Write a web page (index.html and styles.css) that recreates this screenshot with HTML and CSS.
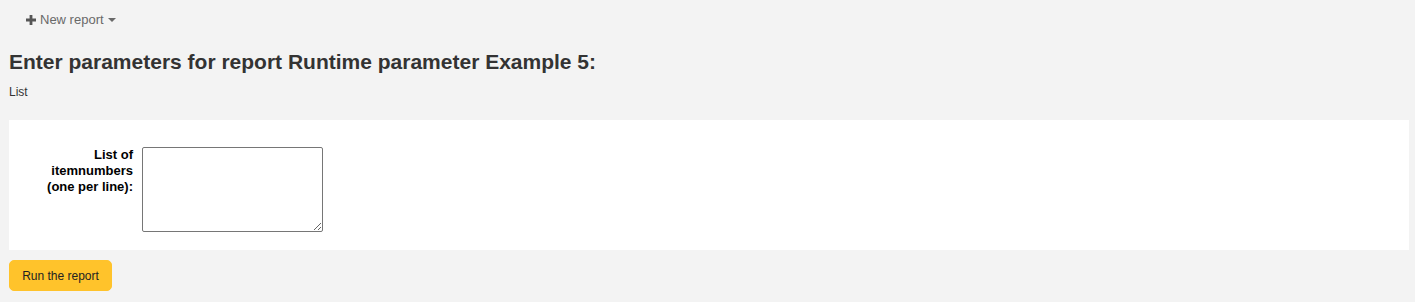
FILE: index.html
```html
<!DOCTYPE html>
<html>
<head>
<meta charset="utf-8">
<link rel="stylesheet" href="styles.css">
</head>
<body>
<div class="toolbar">
  <button class="tb-btn" type="button">
    <svg class="plus" viewBox="0 0 10 10" width="10" height="10"><path d="M3.6 0h2.8v3.6H10v2.8H6.4V10H3.6V6.4H0V3.6h3.6z" fill="#555"/></svg>
    <span>New report</span>
    <span class="caret"></span>
  </button>
</div>
<main class="main">
  <h1 class="title">Enter parameters for report Runtime parameter Example 5:</h1>
  <p class="notes">List</p>
  <form class="report-form">
    <fieldset class="rows">
      <div class="row">
        <label class="row-label" for="sql_params">List of itemnumbers (one per line):</label>
        <textarea id="sql_params" class="param-area"></textarea>
      </div>
    </fieldset>
    <div class="action">
      <button class="run-btn" type="button">Run the report</button>
    </div>
  </form>
</main>
</body>
</html>
```

FILE: styles.css
```css
html, body {
  margin: 0;
  padding: 0;
  background: #f3f3f3;
  font-family: "Liberation Sans", Arial, sans-serif;
  color: #333;
}

.toolbar {
  padding: 8px 0 0 18px;
  height: 32px;
  box-sizing: border-box;
}

.tb-btn {
  display: inline-flex;
  align-items: center;
  gap: 3px;
  background: transparent;
  border: 0;
  padding: 4px 8px;
  font-family: inherit;
  font-size: 13px;
  color: #696969;
}

.plus {
  display: block;
  margin-right: 1px;
}

.caret {
  width: 0;
  height: 0;
  border-left: 4px solid transparent;
  border-right: 4px solid transparent;
  border-top: 4px solid #696969;
  margin-left: 1px;
}

.main {
  padding: 0 6px 0 9px;
}

.title {
  margin: 18px 0 0;
  font-size: 21px;
  font-weight: bold;
  line-height: 24px;
  color: #333;
}

.notes {
  margin: 10px 0 0;
  font-size: 12px;
  line-height: 16px;
}

.report-form {
  margin-top: 20px;
}

.rows {
  margin: 0;
  border: 0;
  background: #fff;
  padding: 27px 0 18px 0;
  min-width: 0;
}

.row {
  display: flex;
  align-items: flex-start;
}

.row-label {
  width: 100px;
  margin-left: 24px;
  text-align: right;
  font-weight: bold;
  font-size: 13px;
  line-height: 16px;
  margin-right: 9px;
  color: #000;
}

.param-area {
  width: 181px;
  height: 85px;
  box-sizing: border-box;
  margin: 0;
  border: 1px solid #767676;
  border-radius: 2px;
  font-family: inherit;
  font-size: 13px;
}

.action {
  margin-top: 10px;
}

.run-btn {
  background: #ffc32b;
  border: 1px solid #ffc32b;
  border-radius: 5px;
  height: 31px;
  width: 103px;
  padding: 0;
  font-family: inherit;
  font-size: 12px;
  color: #222;
}
```
